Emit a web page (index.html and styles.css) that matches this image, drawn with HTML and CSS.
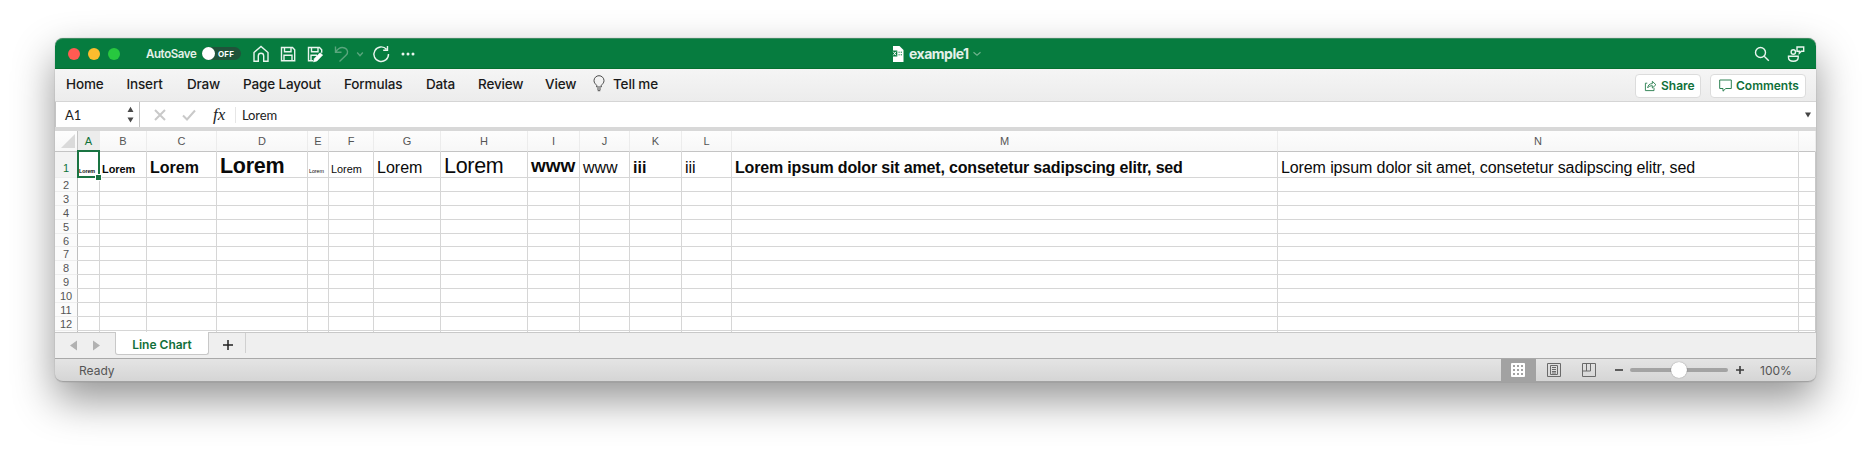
FILE: index.html
```html
<!DOCTYPE html>
<html lang="en">
<head>
<meta charset="utf-8">
<title>example1</title>
<link rel="stylesheet" href="styles.css">
</head>
<body>
<div class="window">
  <header class="titlebar">
    <div class="lights"><i class="light red"></i><i class="light amber"></i><i class="light green"></i></div>
    <span class="autosave">AutoSave</span>
    <span class="toggle"><i class="knob"></i><b>OFF</b></span>
    <div class="quick">
      <svg class="ico" width="18" height="18" viewBox="0 0 18 18"><path d="M2 7.500 9 1.500l7 6V16.200h-4.300V11a2.700 2.700 0 0 0-5.400 0v5.200H2z"/></svg>
      <svg class="ico" width="18" height="18" viewBox="0 0 18 18"><path d="M2.500 2.500h11l2.200 2.200v11H2.500zM5.500 2.500v4.200h6.500V2.500M5 15.700v-5.500h8v5.500"/></svg>
      <svg class="ico" width="18" height="18" viewBox="0 0 18 18"><path d="M7 15.700H2.500V2.500h11l2.200 2.200v3M5.500 2.500v4.200h6.500V2.500M5 15.700v-5.500h6"/><path class="solid" d="m8.300 13.500 5.700-5.700 2.700 2.200-5.700 5.900-3.500 1z"/></svg>
      <svg class="ico dim" width="18" height="18" viewBox="0 0 18 18"><path d="M2.500 1.500v5.700h6M2.700 7C5 3.500 8.500 1.800 11.700 3c3.300 1.300 3.800 5 1.300 7.300L6.500 16.500"/></svg>
      <svg class="ico dim chev" width="8" height="18" viewBox="0 0 8 18"><path d="m1.200 7.500 2.800 3.200 2.800-3.200"/></svg>
      <svg class="ico redo" width="18" height="18" viewBox="0 0 18 18"><path d="M14.500 4.200A7.300 7.300 0 1 0 16.500 9M15.500 1v4.200h-4.300"/></svg>
      <svg class="ico dots" width="14" height="18" viewBox="0 0 14 18"><g class="dot"><circle cx="2" cy="9" r="1.500"/><circle cx="7" cy="9" r="1.500"/><circle cx="12" cy="9" r="1.500"/></g></svg>
    </div>
    <div class="doc">
      <svg width="12" height="16" viewBox="0 0 12 16"><path fill="#fff" d="M1 0h6.500L11.500 4v12H1z"/><path fill="#067c3f" d="M0 4.500h5.300v6H0z"/><path d="m1.300 5.700 2.700 3.600m0-3.600L1.300 9.300" stroke="#fff"/><path d="M6.500 6.200h1.200m1 0H10m-3.500 2.600h1.200m1 0H10" stroke="#067c3f"/></svg>
      <span>example1</span>
      <svg width="8" height="6" viewBox="0 0 8 6"><path d="m.5 1.200 3.500 3 3.500-3" fill="none" stroke="#70b38d" stroke-width="1.200"/></svg>
    </div>
    <div class="tools">
      <svg class="ico" width="16" height="16" viewBox="0 0 16 16"><circle cx="6.500" cy="6.500" r="5"/><path d="m10.200 10.200 4.600 4.600"/></svg>
      <svg class="ico" width="18" height="18" viewBox="0 0 18 18"><circle cx="6.300" cy="7" r="2.200"/><path d="M1.500 11.200h9.700v1.300c0 5-9.700 5-9.700 0zM10 2h6.700v4.300h-2.400l-2 2v-2H10z"/></svg>
    </div>
  </header>

  <nav class="ribbon">
    <span class="m-home">Home</span><span class="m-insert">Insert</span><span class="m-draw">Draw</span><span class="m-page">Page Layout</span><span class="m-form">Formulas</span><span class="m-data">Data</span><span class="m-review">Review</span><span class="m-view">View</span>
    <svg class="bulb" width="12" height="17" viewBox="0 0 12 17"><path d="M3.700 12V10.300C2.500 9 1 7.800 1 5.700a5 5 0 0 1 10 0c0 2.100-1.500 3.300-2.700 4.600V12zM4 14h4M4.700 15.700h2.600"/></svg>
    <span>Tell me</span>
    <div class="actions">
      <button class="btn share"><svg width="13" height="13" viewBox="0 0 14 13"><path d="M3.500 4H1.500v8h9.300V9M4 9c.3-3 2-4.500 5-4.500V2l3.800 3.700L9 9.200V6.700C7 6.700 5.300 7.300 4 9z"/></svg>Share</button>
      <button class="btn comments"><svg width="13" height="13" viewBox="0 0 13 13"><path d="M.7 1h11.600v8.500H6.800L4 12.200V9.500H.7z"/></svg>Comments</button>
    </div>
  </nav>

  <div class="formula">
    <div class="namebox"><span>A1</span><svg width="7" height="17" viewBox="0 0 7 17"><path d="M3.500.8 6.500 6h-6zM3.500 16.600l3-5h-6z"/></svg></div>
    <svg class="fx-ico" width="12" height="12" viewBox="0 0 12 12"><path d="m1 1 10 10M11 1 1 11"/></svg>
    <svg class="fx-ico check" width="14" height="12" viewBox="0 0 14 12"><path d="m1 6.500 4 4L13 1.500"/></svg>
    <i class="fx">fx</i>
    <span class="value">Lorem</span>
    <svg class="drop" width="6" height="6" viewBox="0 0 6 6"><path d="M0 .5h6L3 5.500z"/></svg>
  </div>

  <div class="sheet">
    <div class="row heads"><span class="corner"><svg width="14" height="14" viewBox="0 0 14 14"><path d="M14 0v14H0z" fill="#dadada"/></svg></span><span class="on">A</span><span>B</span><span>C</span><span>D</span><span>E</span><span>F</span><span>G</span><span>H</span><span>I</span><span>J</span><span>K</span><span>L</span><span>M</span><span>N</span><span></span></div>
    <div class="row first"><span class="num on">1</span><span class="s4 b active">Lorem</span><span class="s8 b">Lorem</span><span class="s12 b">Lorem</span><span class="s16 b">Lorem</span><span class="s4">Lorem</span><span class="s8">Lorem</span><span class="s12">Lorem</span><span class="s16">Lorem</span><span class="s14 b">www</span><span class="s12">www</span><span class="s12 b">iii</span><span class="s12">iii</span><span class="s12 b long">Lorem ipsum dolor sit amet, consetetur sadipscing elitr, sed</span><span class="s12 long">Lorem ipsum dolor sit amet, consetetur sadipscing elitr, sed</span><span></span></div>
    <div class="row"><span class="num">2</span><span></span><span></span><span></span><span></span><span></span><span></span><span></span><span></span><span></span><span></span><span></span><span></span><span></span><span></span><span></span></div>
    <div class="row"><span class="num">3</span><span></span><span></span><span></span><span></span><span></span><span></span><span></span><span></span><span></span><span></span><span></span><span></span><span></span><span></span><span></span></div>
    <div class="row"><span class="num">4</span><span></span><span></span><span></span><span></span><span></span><span></span><span></span><span></span><span></span><span></span><span></span><span></span><span></span><span></span><span></span></div>
    <div class="row"><span class="num">5</span><span></span><span></span><span></span><span></span><span></span><span></span><span></span><span></span><span></span><span></span><span></span><span></span><span></span><span></span><span></span></div>
    <div class="row"><span class="num">6</span><span></span><span></span><span></span><span></span><span></span><span></span><span></span><span></span><span></span><span></span><span></span><span></span><span></span><span></span><span></span></div>
    <div class="row"><span class="num">7</span><span></span><span></span><span></span><span></span><span></span><span></span><span></span><span></span><span></span><span></span><span></span><span></span><span></span><span></span><span></span></div>
    <div class="row"><span class="num">8</span><span></span><span></span><span></span><span></span><span></span><span></span><span></span><span></span><span></span><span></span><span></span><span></span><span></span><span></span><span></span></div>
    <div class="row"><span class="num">9</span><span></span><span></span><span></span><span></span><span></span><span></span><span></span><span></span><span></span><span></span><span></span><span></span><span></span><span></span><span></span></div>
    <div class="row"><span class="num">10</span><span></span><span></span><span></span><span></span><span></span><span></span><span></span><span></span><span></span><span></span><span></span><span></span><span></span><span></span><span></span></div>
    <div class="row"><span class="num">11</span><span></span><span></span><span></span><span></span><span></span><span></span><span></span><span></span><span></span><span></span><span></span><span></span><span></span><span></span><span></span></div>
    <div class="row"><span class="num">12</span><span></span><span></span><span></span><span></span><span></span><span></span><span></span><span></span><span></span><span></span><span></span><span></span><span></span><span></span><span></span></div>
    <div class="row"><span class="num"></span><span></span><span></span><span></span><span></span><span></span><span></span><span></span><span></span><span></span><span></span><span></span><span></span><span></span><span></span><span></span></div>
  </div>

  <div class="tabs">
    <svg class="arrows" width="30" height="11" viewBox="0 0 30 11"><path d="M7 .5v10L0 5.500zM23 .5v10l7-5z"/></svg>
    <span class="tab">Line Chart</span>
    <span class="add"><svg width="10" height="10" viewBox="0 0 10 10"><path d="M0 5h10M5 0v10"/></svg></span>
  </div>

  <footer class="status">
    <span class="ready">Ready</span>
    <span class="view on"><svg width="14" height="14" viewBox="0 0 14 14"><rect width="14" height="14" rx="1"/><path d="M2 2h2v2H2zM6 2h2v2H6zM10 2h2v2h-2zM2 6h2v2H2zM6 6h2v2H6zM10 6h2v2h-2zM2 10h2v2H2zM6 10h2v2H6zM10 10h2v2h-2z"/></svg></span>
    <span class="view"><svg width="14" height="14" viewBox="0 0 14 14"><path d="M.5.500h13v13H.5zM3.500 2.500h7v9h-7zM5 4.500h4M5 6.500h4M5 8.500h4M5 10h4"/></svg></span>
    <span class="view"><svg width="14" height="14" viewBox="0 0 14 14"><path d="M.5.500h13v13H.5zM.5 8h8V.5M4.500.5V8"/></svg></span>
    <svg class="sign" width="8" height="8" viewBox="0 0 8 8"><path d="M0 4h8"/></svg>
    <span class="slider"><i></i></span>
    <svg class="sign" width="8" height="8" viewBox="0 0 8 8"><path d="M0 4h8M4 0v8"/></svg>
    <span class="pct">100%</span>
  </footer>
</div>
</body>
</html>
```

FILE: styles.css
```css
* { box-sizing: border-box; }
body { margin: 0; height: 454px; overflow: hidden; background: #fff; padding: 38px 55px 0; font-family: Inter, "Liberation Sans", sans-serif; }
svg { display: block; flex: none; }

.window { width: 1761px; height: 344px; border-radius: 8px; background: #efefef; display: flex; flex-direction: column; box-shadow: 0 0 1px rgba(0,0,0,.45), 0 18px 42px rgba(0,0,0,.42); }

/* Title bar */
.titlebar { height: 31px; flex: none; background: #067c3f; border-bottom: 1px solid #04702f; border-top: 1px solid #3f8b62; border-radius: 8px 8px 0 0; display: flex; align-items: center; padding: 0 11px 0 13px; color: #e4f1e9; position: relative; }
.lights { display: flex; gap: 8px; width: 78px; }
.light { width: 12px; height: 12px; border-radius: 50%; }
.red { background: #ff5b52; }
.amber { background: #fdbc2e; }
.green { background: #27c83f; }
.autosave { font-size: 11.500px; font-weight: 600; width: 56px; letter-spacing: -.4px; white-space: nowrap; }
.toggle { width: 39px; height: 13px; border-radius: 7px; background: #20533a; display: flex; align-items: center; }
.knob { width: 13px; height: 13px; border-radius: 50%; background: #fff; }
.toggle b { font-size: 8px; margin-left: 3px; letter-spacing: .2px; color: #fff; }
.quick { display: flex; align-items: center; gap: 9px; margin-left: 11px; }
.ico { fill: none; stroke: #e9f5ee; stroke-width: 1.400; }
.ico .solid { fill: #fff; stroke: #fff; stroke-width: .6; }
.dim { stroke: #5aa67d; }
.chev { margin-left: -4px; }
.redo { margin-left: -1px; }
.dots { margin-left: 2px; }
.dot { fill: #e9f5ee; stroke: none; }
.doc { position: absolute; left: 837px; top: 6px; display: flex; align-items: center; gap: 5px; font-size: 14px; font-weight: 700; letter-spacing: -.5px; height: 17px; }
.doc svg:last-child { margin-left: -1px; }
.tools { margin-left: auto; display: flex; gap: 17px; align-items: center; }

/* Ribbon */
.ribbon { height: 33px; flex: none; background: linear-gradient(#f5f5f5, #ececec); border-bottom: 1px solid #d5d5d5; display: flex; align-items: center; padding: 0 10px 3px 11px; font-size: 13.500px; font-weight: 500; color: #1a1a1a; white-space: nowrap; letter-spacing: -.15px; }
.m-home, .m-insert { width: 60.500px; }
.m-draw { width: 56px; }
.m-page { width: 101px; }
.m-form { width: 82px; }
.m-data { width: 52px; }
.m-review { width: 67px; }
.m-view { width: 48px; }
.bulb { fill: none; stroke: #4b4b4b; stroke-width: 1; margin-right: 8px; }
.actions { margin: 4px 0 0 auto; display: flex; gap: 9px; }
.btn { height: 24px; border: 1px solid #dcdcdc; border-radius: 4px; background: #fff; display: flex; align-items: center; font: 600 12px Inter, sans-serif; letter-spacing: 0; color: #10703a; padding: 0 0 0 8px; gap: 4px; white-space: nowrap; }
.btn svg { fill: none; stroke: #2c8152; stroke-width: 1; }
.share { width: 66px; }
.comments { width: 96px; }

/* Formula bar */
.formula { height: 25px; flex: none; background: #fff; display: flex; align-items: center; font-family: Lato, sans-serif; font-size: 13px; color: #222; padding-right: 5px; }
.namebox { width: 85px; height: 25px; border-right: 1px solid #c4c4c4; border-left: 1px solid #c4c4c4; display: flex; align-items: center; justify-content: space-between; padding: 0 5px 0 9px; }
.namebox svg { fill: #4a4a4a; }
.fx-ico { fill: none; stroke: #c9c9c9; stroke-width: 2; margin-left: 14px; }
.check { margin-left: 16px; }
.fx { font: italic 17px "Liberation Serif", serif; margin-left: 17px; width: 22px; height: 20px; line-height: 19px; }
.value { border-left: 1px solid #e6e6e6; padding-left: 6px; letter-spacing: -.1px; }
.drop { margin-left: auto; fill: #444; }

/* Grid */
.sheet { height: 206px; flex: none; overflow: hidden; background: #fff; border-top: 4px solid #d8d8d8; border-bottom: 1px solid #c8c8c8; font-family: "Liberation Sans", Arial, sans-serif; }
.row { display: grid; grid-template-columns: 23px 22px 47px 70px 91px 21px 45px 67px 87px 52px 50px 52px 50px 546px 521px 1fr; grid-template-rows: 100%; height: 13.900px; }
.row > span { border-right: 1px solid #d6d6d6; border-bottom: 1px solid #d6d6d6; }
.row > span:last-child { border-right-color: #c8c8c8; }
.heads { height: 21px; background: linear-gradient(#fdfdfd, #f7f7f7); }
.row.heads > span { border-right-color: #ececec; border-bottom-color: #c4c4c4; font-size: 11px; line-height: 21px; text-align: center; color: #555; }
.row.heads > .corner { border-right-color: #c4c4c4; display: flex; align-items: center; justify-content: center; padding-left: 3px; }
.row.heads > .on { background: #ececec; color: #0f7238; }
.first { height: 26px; }
.row > .num { background: #fbfbfb; border-right-color: #bfbfbf; border-bottom-color: #ededed; font-size: 11px; line-height: 14px; text-align: center; color: #555; }
.row.first > .num { line-height: 33px; }
.row > .num.on { color: #0f7238; background: #f3f3f3; }
.first > span:not(.num) { color: #0a0a0a; white-space: nowrap; display: flex; align-items: flex-end; padding-left: 3px; }
.b { font-weight: 700; }
.row.first > .s4 { font-size: 5.400px; line-height: 8px; padding-bottom: 2px; padding-left: 1px; letter-spacing: -.1px; }
.row.first > .s8 { font-size: 10.900px; line-height: 12px; padding-bottom: 2px; padding-left: 2px; }
.s12 { font-size: 16px; line-height: 18px; }
.s14 { font-size: 19px; line-height: 20px; padding-bottom: 1px; }
.s16 { font-size: 21.500px; line-height: 22px; letter-spacing: -.3px; }
.long { letter-spacing: -.11px; }
.long.b { letter-spacing: -.17px; }
.row > .active { position: relative; }
.active::before { content: ""; position: absolute; inset: -2px -1px -1px -1px; border: 2px solid #1a7442; }
.active::after { content: ""; position: absolute; right: -2px; bottom: -3px; width: 5px; height: 5px; background: #1a7442; outline: 1px solid #fff; }

/* Sheet tabs */
.tabs { height: 26px; flex: none; background: #efefef; border-bottom: 1px solid #a9a9a9; display: flex; align-items: flex-start; }
.arrows { fill: #b1b1b1; margin: 7px 15px 0 15px; }
.tab { width: 94px; height: 23px; margin-top: -1px; background: #fff; border: 1px solid #c8c8c8; border-top: 0; border-radius: 0 0 3px 3px; text-align: center; font-size: 12px; font-weight: 600; line-height: 25px; color: #12703a; }
.add { width: 37px; height: 20px; border-right: 1px solid #d0d0d0; display: flex; align-items: center; padding: 3px 0 0 14px; }
.add svg { stroke: #222; stroke-width: 1.500; }

/* Status bar */
.status { height: 23px; flex: none; background: linear-gradient(#e4e4e4, #d5d5d5); border-bottom: 1px solid #a2a2a2; border-radius: 0 0 8px 8px; display: flex; align-items: center; font-size: 12px; color: #555; }
.ready { margin: 0 auto 0 24px; }
.view { width: 35.500px; height: 22px; display: flex; align-items: center; justify-content: center; }
.view.on { background: #a2a2a2; }
.view svg { fill: none; stroke: #6a6a6a; }
.view.on rect { fill: #fff; stroke: none; }
.view.on path { fill: #a2a2a2; stroke: none; }
.sign { stroke: #3c3c3c; stroke-width: 1.600; margin-left: 8px; }
.slider { width: 98px; height: 4px; border-radius: 2px; background: #a3a3a3; margin-left: 7px; display: flex; align-items: center; justify-content: center; }
.slider i { flex: none; width: 16px; height: 16px; border-radius: 50%; background: #fff; box-shadow: 0 0 1px rgba(0,0,0,.5); }
.pct { margin-left: 16px; width: 56px; }
```
